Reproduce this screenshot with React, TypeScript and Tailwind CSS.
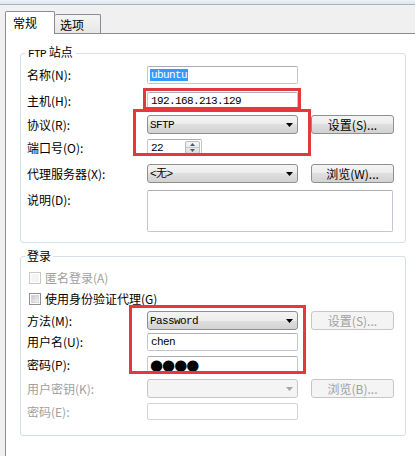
import type { ReactNode } from "react";

const cjk = "font-['Noto_Sans_CJK_SC',sans-serif]";
const mono = "font-['Liberation_Mono','Noto_Sans_CJK_SC',monospace] text-[11px] tracking-[-0.6px]";

const Arrow = ({ disabled }: { disabled?: boolean }) => (
  <svg width="7" height="4" viewBox="0 0 7 4" className="mr-[4px] shrink-0">
    <path d="M0 0h7L3.5 4z" fill={disabled ? "#a6a6a6" : "#000"} />
  </svg>
);

const Label = ({ children, disabled }: { children: ReactNode; disabled?: boolean }) => (
  <span className={`w-[120px] shrink-0 ${disabled ? "text-[#a0a0a0]" : "text-black"}`}>{children}</span>
);

const TextBox = ({ children, disabled, h = "h-[18px]" }: { children?: ReactNode; disabled?: boolean; h?: string }) => (
  <div
    className={`flex ${h} w-[151px] items-center rounded-[2px] border bg-white pl-[2px] ${
      disabled ? "border-[#d0d3d8]" : "border-[#c3c7cf] border-t-[#abadb3]"
    }`}
  >
    {children}
  </div>
);

const Combo = ({ text, disabled }: { text?: string; disabled?: boolean }) => (
  <div
    className={`flex h-[19px] w-[151px] items-center justify-between rounded-[3px] border pl-[2px] ${
      disabled
        ? "border-[#c4c7ca] bg-[#f4f4f4]"
        : "border-[#8e8f8f] bg-[linear-gradient(#f4f4f4,#ececec_50%,#dfdfdf_50%,#d2d2d2)]"
    }`}
  >
    <span className={mono}>{text}</span>
    <Arrow disabled={disabled} />
  </div>
);

const Btn = ({ children, disabled }: { children: ReactNode; disabled?: boolean }) => (
  <div
    className={`ml-[13px] flex h-[19px] w-[83px] items-center justify-center rounded-[3px] border ${
      disabled
        ? "border-[#c4c7ca] bg-[#f4f4f4] text-[#a0a0a0]"
        : "border-[#8e8f8f] bg-[linear-gradient(#f4f4f4,#ececec_50%,#dfdfdf_50%,#d2d2d2)] text-black"
    }`}
  >
    {children}
  </div>
);

const Check = ({ children, disabled }: { children: ReactNode; disabled?: boolean }) => (
  <div className={`flex h-[13px] items-center pl-[8px] ${disabled ? "text-[#a0a0a0]" : "text-black"}`}>
    <div
      className={`flex h-[12px] w-[12px] items-center justify-center border ${
        disabled ? "border-[#c9c9c9] bg-white" : "border-[#8f8f8f] bg-white"
      }`}
    >
      <div
        className={`h-[8px] w-[8px] ${
          disabled ? "bg-[#f4f4f4]" : "bg-[linear-gradient(135deg,#c9c9c9,#f1f1f1)] border border-[#d6d6d6]"
        }`}
      />
    </div>
    <span className="ml-[4px]">{children}</span>
  </div>
);

export default function App() {
  return (
    <div className={`relative flex h-[456px] w-[415px] flex-col overflow-hidden bg-[#f0f0f0] text-[12px] leading-[12px] text-black ${cjk}`}>
      <div className="h-[5px] shrink-0 border-b border-[#a9b3c0] bg-[linear-gradient(#eef3f9,#dde6f0)]" />

      <div className="flex h-[28px] shrink-0 items-end pl-[5px]">
        <div className="relative z-10 -mb-px h-[23px] w-[50px] rounded-t-[2px] border border-b-0 border-[#898c95] bg-white pl-[7px] pt-[5px]">
          常规
        </div>
        <div className="h-[19px] w-[46px] rounded-t-[2px] border border-b-0 border-l-0 border-[#898c95] bg-[linear-gradient(#f5f5f5,#e6e6e6)] pl-[5px] pt-[4px]">
          选项
        </div>
      </div>

      <div className="ml-[5px] flex-1 border-l border-t border-[#898c95] bg-white">
        <fieldset className="ml-[14px] mt-[12px] w-[386px] rounded-[3px] border border-[#d5dfe5] pb-[10px] pt-[6px]">
          <legend className="ml-[4px] px-[3px] leading-[12px]">
            <span className={mono}>FTP</span> 站点
          </legend>
          <div className="flex h-[18px] items-center pl-[6px]">
            <Label>名称(N):</Label>
            <TextBox>
              <span className={`${mono} bg-[#3399ff] px-px text-white`}>ubuntu</span>
            </TextBox>
          </div>
          <div className="mt-[8px] flex h-[18px] items-center pl-[6px]">
            <Label>主机(H):</Label>
            <TextBox>
              <span className={`${mono} pl-px`}>192.168.213.129</span>
            </TextBox>
          </div>
          <div className="mt-[5px] flex h-[19px] items-center pl-[6px]">
            <Label>协议(R):</Label>
            <Combo text="SFTP" />
            <Btn>设置(S)...</Btn>
          </div>
          <div className="mt-[5px] flex h-[17px] items-center pl-[6px]">
            <Label>端口号(O):</Label>
            <div className="flex h-[17px] w-[55px] items-stretch justify-between rounded-[2px] border border-[#c3c7cf] border-t-[#abadb3] bg-white pl-[2px]">
              <span className={`${mono} self-center pl-px`}>22</span>
              <div className="m-px flex w-[15px] flex-col rounded-[2px] border border-[#b8bcc3] bg-[linear-gradient(#f4f4f4,#dedede)]">
                <div className="flex flex-1 items-center justify-center border-b border-[#c4c7cc]">
                  <svg width="5" height="3" viewBox="0 0 5 3">
                    <path d="M0 3h5L2.5 0z" fill="#4a5a6d" />
                  </svg>
                </div>
                <div className="flex flex-1 items-center justify-center">
                  <svg width="5" height="3" viewBox="0 0 5 3">
                    <path d="M0 0h5L2.5 3z" fill="#4a5a6d" />
                  </svg>
                </div>
              </div>
            </div>
          </div>
          <div className="mt-[8px] flex h-[19px] items-center pl-[6px]">
            <Label>代理服务器(X):</Label>
            <Combo text="<无>" />
            <Btn>浏览(W)...</Btn>
          </div>
          <div className="mt-[7px] flex h-[42px] items-start pl-[6px]">
            <span className="w-[120px] shrink-0 pt-[4px]">说明(D):</span>
            <div className="h-[42px] w-[246px] rounded-[2px] border border-[#c3c7cf] border-t-[#abadb3] bg-white" />
          </div>
        </fieldset>

        <fieldset className="ml-[14px] mt-[7px] w-[386px] rounded-[3px] border border-[#d5dfe5] pb-[15px] pt-[9px]">
          <legend className="ml-[4px] px-[2px] leading-[12px]">登录</legend>
          <Check disabled>匿名登录(A)</Check>
          <div className="mt-[8px]">
            <Check>使用身份验证代理(G)</Check>
          </div>
          <div className="mt-[6px] flex h-[19px] items-center pl-[6px]">
            <Label>方法(M):</Label>
            <Combo text="Password" />
            <Btn disabled>设置(S)...</Btn>
          </div>
          <div className="mt-[3px] flex h-[18px] items-center pl-[6px]">
            <Label>用户名(U):</Label>
            <TextBox>
              <span className={`${mono} pl-px`}>chen</span>
            </TextBox>
          </div>
          <div className="mt-[5px] flex h-[18px] items-center pl-[6px]">
            <Label>密码(P):</Label>
            <TextBox>
              <span className="font-['DejaVu_Sans',sans-serif] text-[15px] leading-[15px] tracking-[-1px]">●●●●</span>
            </TextBox>
          </div>
          <div className="mt-[5px] flex h-[19px] items-center pl-[6px]">
            <Label disabled>用户密钥(K):</Label>
            <Combo disabled />
            <Btn disabled>浏览(B)...</Btn>
          </div>
          <div className="mt-[5px] flex h-[17px] items-center pl-[6px]">
            <Label disabled>密码(E):</Label>
            <TextBox disabled h="h-[17px]" />
          </div>
        </fieldset>
      </div>

      <div className="absolute left-[143px] top-[88px] h-[22px] w-[158px] border-[3px] border-[#e3383e]" />
      <div className="absolute left-[133px] top-[109px] h-[47px] w-[178px] border-[3px] border-[#e3383e]" />
      <div className="absolute left-[129px] top-[305px] h-[69px] w-[177px] border-[3px] border-[#e3383e]" />
    </div>
  );
}
